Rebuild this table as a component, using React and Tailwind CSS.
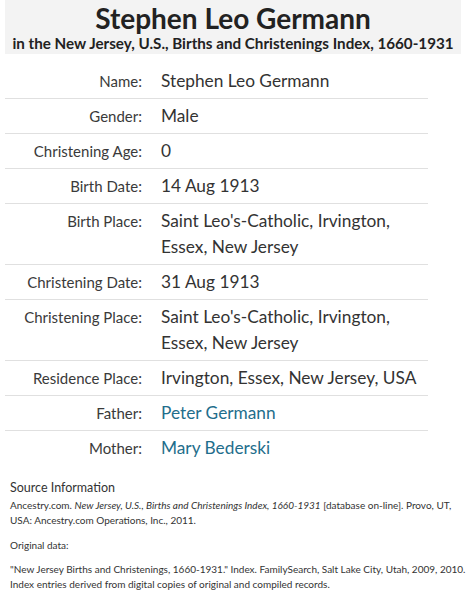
import React from "react";

const rows = [
  ["Name:", ["Stephen Leo Germann"]],
  ["Gender:", ["Male"]],
  ["Christening Age:", ["0"]],
  ["Birth Date:", ["14 Aug 1913"]],
  ["Birth Place:", ["Saint Leo's-Catholic, Irvington,", "Essex, New Jersey"]],
  ["Christening Date:", ["31 Aug 1913"]],
  ["Christening Place:", ["Saint Leo's-Catholic, Irvington,", "Essex, New Jersey"]],
  ["Residence Place:", ["Irvington, Essex, New Jersey, USA"]],
  ["Father:", ["Peter Germann"], true],
  ["Mother:", ["Mary Bederski"], true],
];

export default function App() {
  return (
    <div className="w-[474px] min-h-[599px] bg-white text-[#333] font-['Lato',sans-serif]">
      <div className="ml-[5px] w-[456px] h-[54px] bg-[#f3f3f3] flex flex-col items-center">
        <div className="text-[28px] font-bold leading-[32px] text-[#222] pt-[2px]">Stephen Leo Germann</div>
        <div className="text-[15.2px] font-bold leading-[18px] text-[#222]">in the New Jersey, U.S., Births and Christenings Index, 1660-1931</div>
      </div>
      <div className="ml-[5px] w-[423px] mt-[10px]">
        {rows.map(([label, vals, link], i) => (
          <div key={i} className={"flex py-[4px] " + (i < rows.length - 1 ? "border-b border-[#e0e0e0]" : "")}>
            <div className="w-[137px] shrink-0 text-right text-[15px] leading-[26px] text-[#3a3a3a]">{label}</div>
            <div className={"pl-[19px] text-[17.3px] leading-[26px] " + (link ? "text-[#1f6e8c]" : "text-[#333]")}>
              {vals.map((v, j) => (
                <div key={j}>{v}</div>
              ))}
            </div>
          </div>
        ))}
      </div>
      <div className="ml-[10px] mr-[4px] mt-[14px] text-[#333]">
        <div className="text-[12.5px] leading-[18px]">Source Information</div>
        <div className="text-[10px] leading-[15px] mt-[1px]">
          Ancestry.com. <i>New Jersey, U.S., Births and Christenings Index, 1660-1931</i> [database on-line]. Provo, UT, USA: Ancestry.com Operations, Inc., 2011.
        </div>
        <div className="text-[10px] leading-[15px] mt-[10px]">Original data:</div>
        <div className="text-[10px] leading-[15px] mt-[9px]">
          "New Jersey Births and Christenings, 1660-1931." Index. FamilySearch, Salt Lake City, Utah, 2009, 2010. Index entries derived from digital copies of original and compiled records.
        </div>
      </div>
    </div>
  );
}
